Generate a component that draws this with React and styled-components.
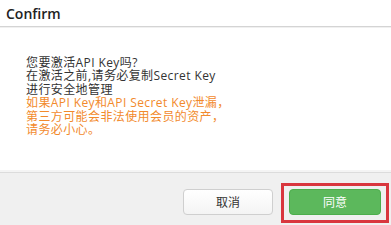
import { createGlobalStyle, styled } from "styled-components";

const Global = createGlobalStyle`
  html, body {
    margin: 0;
    padding: 0;
    background: #fff;
  }
  body {
    font-family: "Open Sans", "Noto Sans CJK SC", sans-serif;
  }
`;

const StyledDialog = styled.div`
  width: 391px;
  height: 225px;
  display: flex;
  flex-direction: column;
  background: #fff;
  overflow: hidden;
`;

const Header = styled.div`
  height: 26px;
  padding-left: 6px;
  display: flex;
  align-items: center;
  border-bottom: 1px solid #d4d4d4;
  box-shadow: 0 1px 0 #f0f0f0;
  font-family: "Open Sans", sans-serif;
  font-weight: 600;
  font-size: 14px;
  color: #222;
`;

const Body = styled.div`
  flex: 1;
  padding: 29px 26px 0;
  font-size: 12px;
  line-height: 13.4px;
  letter-spacing: 0.4px;
  color: #333;
`;

const Line = styled.p`
  margin: 0;
  color: ${(p) => (p.$warn ? "#f28a2c" : "#333")};
`;

const Footer = styled.div`
  height: 42px;
  padding-top: 10px;
  display: flex;
  justify-content: flex-end;
  align-items: flex-start;
  gap: 8px;
  padding-right: 2px;
  background: #f0f0f0;
  border-top: 1px solid #dcdcdc;
  box-shadow: 0 -2px 0 #f4f4f4;
`;

const Button = styled.button`
  width: ${(p) => p.width};
  height: 26px;
  margin-top: ${(p) => p.$offset || "0"};
  border-radius: 4px;
  font-family: "Open Sans", "Noto Sans CJK SC", sans-serif;
  font-size: 12px;
  cursor: pointer;
  border: 1px solid ${(p) => (p.$primary ? "#4cae4c" : "#cfcfcf")};
  background: ${(p) =>
    p.$primary ? "#5cb85c" : "linear-gradient(#ffffff, #f4f4f4)"};
  color: ${(p) => (p.$primary ? "#fff" : "#333")};
`;

const Highlight = styled.div`
  border: 3px solid #d9363e;
  padding: 3px 5px 5px;
`;

export default function App() {
  return (
    <>
      <Global />
      <StyledDialog>
        <Header>Confirm</Header>
        <Body>
          <Line>您要激活API Key吗?</Line>
          <Line>在激活之前,请务必复制Secret Key</Line>
          <Line>进行安全地管理</Line>
          <Line $warn>如果API Key和API Secret Key泄漏，</Line>
          <Line $warn>第三方可能会非法使用会员的资产，</Line>
          <Line $warn>请务必小心。</Line>
        </Body>
        <Footer>
          <Button width="90px" $offset="6px">取消</Button>
          <Highlight>
            <Button width="92px" $primary>同意</Button>
          </Highlight>
        </Footer>
      </StyledDialog>
    </>
  );
}
